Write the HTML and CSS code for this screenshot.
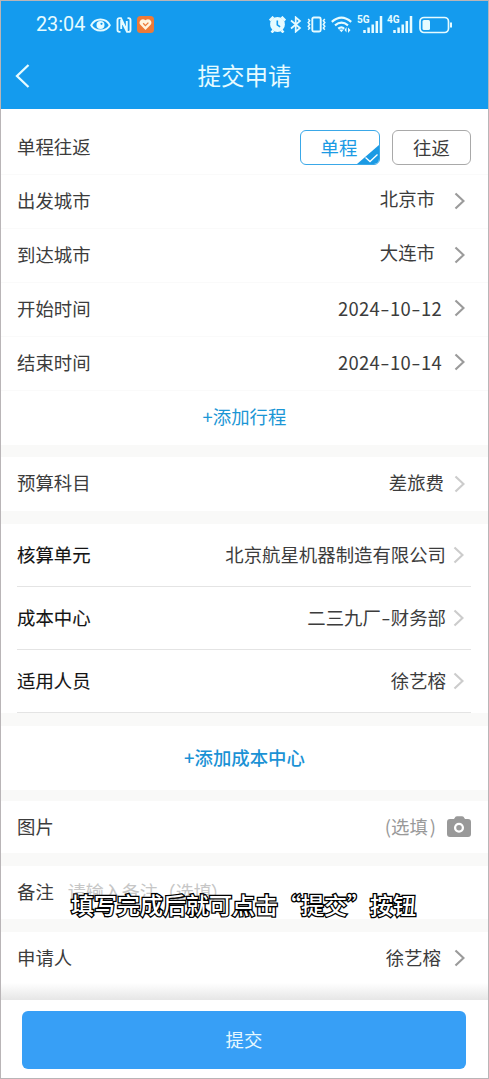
FILE: index.html
```html
<!DOCTYPE html>
<html lang="zh-CN">
<head>
<meta charset="utf-8">
<title>提交申请</title>
<link rel="stylesheet" href="styles.css">
</head>
<body>
<svg class="defs" width="0" height="0" aria-hidden="true">
  <symbol id="chevron" viewBox="0 0 11 18"><path d="M1.500 1.500 9.500 9l-8 7.500" fill="none" stroke="currentColor" stroke-width="2.200"/></symbol>
  <symbol id="bars" viewBox="0 0 20 17"><path d="M1.500 17v-3M5.600 17v-5.500M9.700 17V8.500M13.800 17V5M18 17V0" fill="none" stroke="currentColor" stroke-width="2.500"/></symbol>
</svg>
<div class="phone">
  <header class="header">
    <div class="status">
      <span class="clock">23:04</span>
      <svg class="eye" width="21" height="16" viewBox="0 0 21 16"><path d="M1.200 8.200C5 .5 16 .5 19.800 8.200 16 15.300 5 15.300 1.200 8.200Z" fill="none" stroke="currentColor" stroke-width="1.900"/><circle cx="10.500" cy="8" r="4" fill="currentColor"/><circle cx="11.500" cy="6.800" r="1.100" fill="#149bee"/></svg>
      <svg class="nfc" width="16" height="16" viewBox="0 0 16 16"><path d="M4.500 14.900H3.500q-2 0-2-2V3.100q0-2 2-2H5L10.800 14V4M11.500 1.100h1q2 0 2 2v9.800q0 2-2 2H11L5.200 3v9" fill="none" stroke="currentColor" stroke-width="1.900"/></svg>
      <svg class="health" width="17" height="17" viewBox="0 0 17 17"><rect width="17" height="17" rx="3.500" fill="#ed7a38"/><path d="M8.500 14 3.400 8.700C.8 5.700 5 .9 8.500 4.300 12 .9 16.200 5.700 13.600 8.700Z" fill="#fff4df"/><path d="m6.200 7.300 2.200 2.300 3-3" fill="none" stroke="#ed7a38" stroke-width="1.300"/></svg>
      <span class="spacer"></span>
      <svg class="alarm" width="17" height="17" viewBox="0 0 17 17"><circle cx="8.500" cy="8.500" r="7.400" fill="currentColor"/><path d="M.8 4.500 4.500.8M16.200 4.500 12.500.8M2.500 16.500l2-2M14.500 16.500l-2-2" stroke="currentColor" stroke-width="2.600"/><path d="M8.300 4.500v4.300l2.800 2" fill="none" stroke="#149bee" stroke-width="1.600"/></svg>
      <svg class="bt" width="12" height="17" viewBox="0 0 12 17"><path d="m1 4.500 9 7.500-4.300 3.700V1.300L10 5 1 12.500" fill="none" stroke="currentColor" stroke-width="1.700"/></svg>
      <svg class="vibrate" width="19" height="17" viewBox="0 0 19 17"><rect x="5.300" y="1.500" width="8.400" height="14" rx="1.500" fill="none" stroke="currentColor" stroke-width="1.900"/><path d="m1.200 3 1.500 1.800-1.500 1.800 1.500 1.800-1.500 1.800 1.500 1.800-1.500 1.800M17.800 3l-1.500 1.800 1.500 1.800-1.500 1.800 1.500 1.800-1.500 1.800 1.500 1.800" fill="none" stroke="currentColor" stroke-width="1.500"/></svg>
      <svg class="wifi" width="21" height="17" viewBox="0 0 21 17"><path d="M.8 5.800Q10.500-2.600 20.200 5.800M4 9.400q6.500-5.400 13 0M7.200 12.700q3.300-2.600 6 0" fill="none" stroke="currentColor" stroke-width="2.200"/><path d="m8 13.500 2.400 2.800 2.400-2.800zM13.500 14l2-3v5.500zM17 11.500v5.500l2.500-3z" fill="currentColor"/></svg>
      <span class="signal"><b>5G</b><svg width="20" height="17"><use href="#bars"/></svg></span>
      <span class="signal"><b>4G</b><svg width="20" height="17"><use href="#bars"/></svg></span>
      <svg class="battery" width="34" height="18" viewBox="0 0 34 18"><rect x="1" y="1.500" width="28.500" height="15" rx="4" fill="none" stroke="currentColor" stroke-width="1.700"/><rect x="3.500" y="4" width="7.500" height="10" rx="1.500" fill="currentColor"/><path d="M32 6.500v5" stroke="currentColor" stroke-width="2"/></svg>
    </div>
    <div class="nav">
      <svg class="back" width="15" height="24" viewBox="0 0 15 24"><path d="M13.500 1 2 12l11.500 11" fill="none" stroke="currentColor" stroke-width="2.300"/></svg>
      <h1>提交申请</h1>
    </div>
  </header>

  <main>
    <section class="trip">
      <div class="row first"><span class="label">单程往返</span>
        <div class="options">
          <button class="option selected">单程<svg class="tick" width="22" height="19" viewBox="0 0 22 19"><path d="M22 0v19H0z" fill="#1b9ae4"/><path d="m8.500 12.500 4.500 4 7.500-7" fill="none" stroke="#fff" stroke-width="1.300"/></svg></button>
          <button class="option">往返</button>
        </div>
      </div>
      <div class="row"><span class="label">出发城市</span><span class="value city">北京市</span><svg class="chevron"><use href="#chevron"/></svg></div>
      <div class="row"><span class="label">到达城市</span><span class="value city">大连市</span><svg class="chevron"><use href="#chevron"/></svg></div>
      <div class="row dated"><span class="label">开始时间</span><span class="value date">2024<span class="dash">-</span>10<span class="dash">-</span>12</span><svg class="chevron"><use href="#chevron"/></svg></div>
      <div class="row dated"><span class="label">结束时间</span><span class="value date">2024<span class="dash">-</span>10<span class="dash">-</span>14</span><svg class="chevron"><use href="#chevron"/></svg></div>
      <div class="add">+添加行程</div>
    </section>

    <section class="budget">
      <div class="row"><span class="label">预算科目</span><span class="value">差旅费</span><svg class="chevron light"><use href="#chevron"/></svg></div>
    </section>

    <section class="cost">
      <div class="row"><span class="label">核算单元</span><span class="value">北京航星机器制造有限公司</span><svg class="chevron light"><use href="#chevron"/></svg></div>
      <div class="row"><span class="label">成本中心</span><span class="value">二三九厂<span class="dash">-</span>财务部</span><svg class="chevron light"><use href="#chevron"/></svg></div>
      <div class="row"><span class="label">适用人员</span><span class="value">徐艺榕</span><svg class="chevron light"><use href="#chevron"/></svg></div>
    </section>

    <section class="add-cost">+添加成本中心</section>

    <section class="picture">
      <div class="row"><span class="label">图片</span><span class="value optional">(选填<span class="paren">)</span></span>
        <svg class="camera" width="24" height="22" viewBox="0 0 24 22"><path d="M7 3 8.500.8Q9 .3 10 .3h5q1 0 1.500.5L18 3h3q3 0 3 3v12q0 3-3 3H3q-3 0-3-3V6q0-3 3-3z" fill="#999"/><circle cx="12" cy="11.800" r="3.900" fill="none" stroke="#fff" stroke-width="2.300"/></svg>
      </div>
    </section>

    <section class="remark">
      <div class="row"><span class="label">备注</span><span class="placeholder">请输入备注（选填<span class="close">）</span></span></div>
      <p class="caption">填写完成后就可点击“提交”按钮</p>
    </section>

    <section class="applicant">
      <div class="row"><span class="label">申请人</span><span class="value">徐艺榕</span><svg class="chevron"><use href="#chevron"/></svg></div>
    </section>
  </main>

  <footer class="footer"><button class="submit">提交</button></footer>
</div>
</body>
</html>
```

FILE: styles.css
```css
* { box-sizing: border-box; }
body { margin: 0; background: #fff; font-family: "Noto Sans CJK SC", sans-serif; font-size: 18.400px; line-height: 26px; color: #3c3c3c; }
button { font: inherit; padding: 0; }
svg { display: block; flex: none; }
.defs { position: absolute; }
.phone { width: 489px; height: 1079px; border: 1px solid #b9b5b7; display: flex; flex-direction: column; overflow: hidden; background: #f9f9f8; }

.header { height: 108px; flex: none; background: #149bee; color: #e6fbff; }
.status { display: flex; align-items: center; height: 47px; padding: 0 35px 0 35px; }
.clock { font-family: Roboto, sans-serif; font-size: 19.800px; width: 50px; padding-top: 1px; }
.eye { margin-left: 4px; }
.nfc { margin-left: 5px; }
.health { margin-left: 5px; }
.spacer { flex: 1; }
.bt { margin-left: 4px; }
.vibrate { margin-left: 5px; }
.wifi { margin-left: 5px; }
.signal { display: flex; margin-left: 5px; width: 26px; height: 17px; }
.signal + .signal { margin-left: 4px; }
.signal b { font: 700 10px/9px Roboto, sans-serif; width: 6px; margin-top: -1px; flex: none; }
.battery { margin-left: 6px; }
.nav { display: grid; grid-template-columns: 40px 1fr 40px; align-items: center; height: 56px; }
.back { margin-left: 14px; }
h1 { margin: -3px 0 0; font-size: 23.500px; font-weight: 400; line-height: 34px; text-align: center; }

main { flex: none; height: 891px; }
section { background: #fff; }
.row { display: flex; align-items: center; height: 54px; padding: 0 23px 0 16px; }
.label { flex: none; margin-bottom: 3px; }
.value { margin-left: auto; margin-right: 10px; margin-bottom: 3px; white-space: nowrap; }
.chevron { width: 11px; height: 18px; color: #9b9b9b; }
.chevron.light { color: #ccc; }

.trip { height: 336px; }
.trip .row { border-bottom: 1px solid #fafafa; }
.trip .first { height: 66px; padding: 12px 17px 0 16px; }
.trip .chevron { margin-top: -1px; }
.options { display: flex; gap: 12px; margin-left: auto; }
.option { position: relative; width: 79px; height: 35px; border: 1.500px solid #a9a9a9; border-radius: 6px; background: #fff; color: #3c3c3c; line-height: 31px; padding-bottom: 1px; }
.option.selected { border-color: #3aa8e8; color: #1b9ae4; overflow: hidden; width: 80px; padding-right: 2px; }
.tick { position: absolute; right: 0; bottom: 0; }
.city { margin-right: 19px; margin-bottom: 7px; }
.date { margin-right: 12px; letter-spacing: .300px; }
.dated .chevron { margin-bottom: 2px; }
.dash { display: inline-block; width: 10px; text-align: center; letter-spacing: 0; transform: scaleX(1.450); }
.add { height: 54px; line-height: 51px; text-align: center; color: #1b96d5; }

.budget { margin-top: 12px; height: 54px; }
.budget .label, .budget .value { margin-bottom: 4px; }
.cost { margin-top: 13px; padding: 0 17px 0 16px; height: 189px; }
.cost .row { height: 63px; padding: 0 7px 0 0; border-bottom: 1.500px solid #e4e4e4; }
.cost .label { color: #141414; -webkit-text-stroke: .120px #141414; }
.cost .value { margin-right: 7px; margin-bottom: 3px; }
.add-cost { margin-top: 13px; height: 64px; line-height: 62px; text-align: center; color: #1b92d5; font-weight: 500; }
.picture { margin-top: 11px; height: 52px; }
.picture .row { height: 52px; padding-right: 17px; }
.optional { color: #999; margin-right: 11px; }
.paren { margin-left: 2px; }
.remark { position: relative; margin-top: 13px; height: 53px; }
.remark .label { margin-bottom: 4px; }
.placeholder { margin: 0 0 5px 14px; color: #c6c6c6; font-size: 18px; }
.close { margin-left: -1px; }
.caption { position: absolute; left: 70px; top: 21px; margin: 0; font-size: 23px; line-height: 34px; font-weight: 500; color: #fff; white-space: nowrap; -webkit-text-stroke: 2.600px #000; paint-order: stroke fill; }
.applicant { margin-top: 13px; height: 68px; background: linear-gradient(#fff 51px, #e6e6e6 68px); }
.applicant .row { height: 52px; }
.applicant .value { margin-right: 13px; }

.footer { flex: none; height: 78px; padding: 11px 22px 9px 21px; background: #fff; }
.submit { width: 100%; height: 58px; border: 0; border-radius: 6px; background: #379ff6; color: #e6f8ff; padding-bottom: 2px; }
```
